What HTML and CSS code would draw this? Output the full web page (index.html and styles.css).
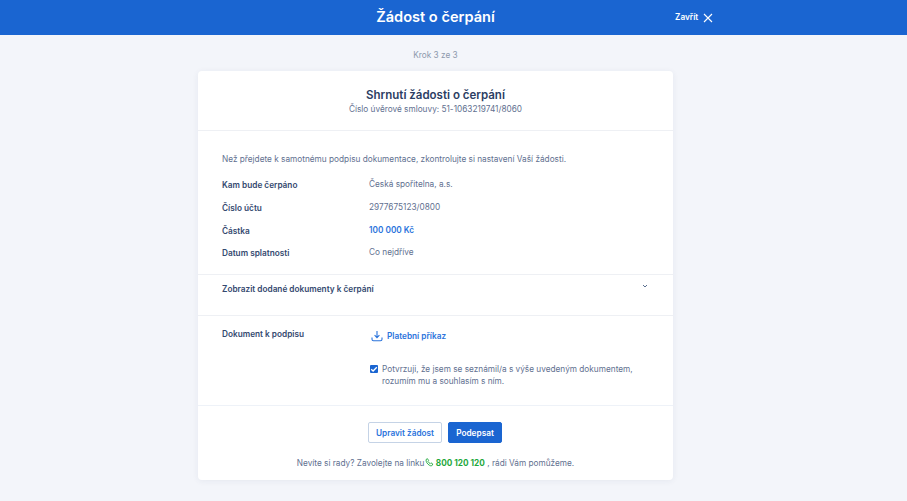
FILE: index.html
```html
<!DOCTYPE html>
<html lang="cs">
<head>
<meta charset="utf-8">
<title>Žádost o čerpání</title>
<link rel="stylesheet" href="styles.css">
</head>
<body>
<header class="topbar">
  <div class="topbar-inner">
    <h1 class="topbar-title">Žádost o čerpání</h1>
    <a class="close">Zavřít
      <svg class="close-icon" viewBox="0 0 10 10" width="10" height="10"><path d="M1 1l8 8M9 1l-8 8" fill="none" stroke="#fff" stroke-width="1.1"/></svg>
    </a>
  </div>
</header>
<main class="main">
  <p class="step">Krok 3 ze 3</p>
  <section class="card">
    <div class="card-head">
      <h2 class="card-title">Shrnutí žádosti o čerpání</h2>
      <p class="card-sub">Číslo úvěrové smlouvy: 51-1063219741/8060</p>
    </div>
    <div class="summary">
      <p class="intro">Než přejdete k samotnému podpisu dokumentace, zkontrolujte si nastavení Vaší žádosti.</p>
      <dl class="rows">
        <div class="row"><dt class="label">Kam bude čerpáno</dt><dd class="value">Česká spořitelna, a.s.</dd></div>
        <div class="row"><dt class="label">Číslo účtu</dt><dd class="value">2977675123/0800</dd></div>
        <div class="row"><dt class="label">Částka</dt><dd class="value amount">100 000 Kč</dd></div>
        <div class="row"><dt class="label">Datum splatnosti</dt><dd class="value">Co nejdříve</dd></div>
      </dl>
    </div>
    <div class="toggle">
      <span class="label">Zobrazit dodané dokumenty k čerpání</span>
      <svg class="chevron" viewBox="0 0 6 4" width="6" height="4"><path d="M1 1l2 2 2-2" fill="none" stroke="#5a6f8f" stroke-width="1"/></svg>
    </div>
    <div class="sign">
      <div class="label sign-label">Dokument k podpisu</div>
      <div class="sign-body">
        <a class="doc">
          <svg viewBox="0 0 12 12" width="12" height="12"><path d="M6 1v6.5M3.600 5.200L6 7.600l2.400-2.400M1 7.500v1.700c0 .9.6 1.500 1.500 1.500h7c.9 0 1.500-.6 1.500-1.500V7.500" fill="none" stroke="#2b74dc" stroke-width="1.100"/></svg>
          Platební příkaz
        </a>
        <div class="confirm">
          <span class="check"><svg viewBox="0 0 8 8" width="8" height="8"><path d="M1.200 4.200l1.900 1.800 3.700-3.800" fill="none" stroke="#fff" stroke-width="1.300"/></svg></span>
          <span>Potvrzuji, že jsem se seznámil/a s výše uvedeným dokumentem, rozumím mu a souhlasím s ním.</span>
        </div>
      </div>
    </div>
    <div class="foot">
      <div class="actions">
        <button class="btn btn-outline">Upravit žádost</button>
        <button class="btn btn-primary">Podepsat</button>
      </div>
      <p class="help">Nevíte si rady? Zavolejte na linku<svg class="phone" viewBox="0 0 10 10" width="9" height="9"><path d="M1.600 1.200l1.200-.4 1.200 2-.8.8c.5 1.200 1.400 2.100 2.600 2.600l.8-.8 2 1.200-.4 1.200c-.3.8-1 1.100-1.800.9C3.900 7.900 2.100 6.100 1.300 3.600c-.3-1 0-1.900.3-2.400z" fill="none" stroke="#1fa83c" stroke-width="1"/></svg> <strong class="tel">800 120 120</strong> , rádi Vám pomůžeme.</p>
    </div>
  </section>
</main>
</body>
</html>
```

FILE: styles.css
```css
* { box-sizing: border-box; }
html, body { margin: 0; height: 100%; }
body {
  background: #f3f5fa;
  font-family: Inter, "Noto Sans", sans-serif;
  font-size: 8.25px;
  color: #5f7090;
  overflow: hidden;
}
p, h1, h2, dl, dd { margin: 0; }

.topbar { height: 35px; background: #1a65d1; color: #fff; }
.topbar-inner {
  width: 871px;
  height: 100%;
  position: relative;
  display: flex;
  align-items: center;
  justify-content: center;
}
.topbar-title { font-size: 14.6px; font-weight: 600; line-height: 35px; }
.close {
  position: absolute;
  left: 675px;
  top: 12px;
  display: flex;
  align-items: center;
  gap: 5px;
  font-size: 8.25px;
  font-weight: 600;
  line-height: 11px;
}
.close-icon { display: block; }

.main { width: 871px; display: flex; flex-direction: column; align-items: center; }
.step { margin-top: 14px; padding-top: 1px; height: 22px; line-height: 11px; color: #8d99ad; }

.card {
  width: 475px;
  height: 409px;
  background: #fff;
  border-radius: 4px;
  box-shadow: 0 1px 6px rgba(40, 60, 100, .07);
  display: flex;
  flex-direction: column;
}
.card-head {
  height: 60px;
  padding-top: 16px;
  border-bottom: 1px solid #eef0f4;
  text-align: center;
}
.card-title { font-size: 11.5px; font-weight: 600; line-height: 16px; color: #2c3e63; }
.card-sub { line-height: 11px; padding-top: 1px; }

.summary { height: 144px; padding: 23px 24px 0; border-bottom: 1px solid #eef0f4; }
.intro { line-height: 11px; }
.rows { margin-top: 14.4px; display: flex; flex-direction: column; gap: 11.7px; }
.row { display: flex; height: 11px; }
.label { font-weight: 600; color: #34496f; line-height: 11px; }
.row .label { width: 147px; padding-top: 1px; }
.value { line-height: 11px; }
.amount { font-weight: 600; color: #2b74dc; }

.toggle {
  height: 41px;
  padding: 9px 24px 0;
  border-bottom: 1px solid #eef0f4;
  display: flex;
  justify-content: space-between;
  align-items: flex-start;
}
.chevron { margin: 0 1px 0 0; }

.sign { height: 90px; padding: 13px 24px 0; border-bottom: 1px solid #eef2f8; display: flex; }
.sign-label { width: 147px; }
.sign-body { flex: 1; }
.doc {
  display: flex;
  align-items: center;
  gap: 4px;
  margin: 0 0 0 2px;
  height: 14px;
  font-weight: 600;
  color: #2b74dc;
}
.confirm { margin-top: 20px; display: flex; gap: 4px; line-height: 12px; width: 275px; padding-left: 1px; }
.check {
  flex: none;
  width: 8px;
  height: 8px;
  margin-top: 2px;
  background: #1a65d1;
  border-radius: 1px;
  display: flex;
}

.foot { flex: 1; padding-top: 16px; }
.actions { display: flex; justify-content: center; gap: 6px; padding-right: 1px; }
.btn {
  height: 21px;
  border-radius: 2px;
  font: 600 8.25px Inter, "Noto Sans", sans-serif;
  padding: 0;
}
.btn-outline { width: 74px; background: #fff; border: 1px solid #c5d3e6; color: #2b74dc; }
.btn-primary { width: 54px; background: #1a65d1; border: 1px solid #1a65d1; color: #fff; }
.help { margin-top: 15px; text-align: center; line-height: 11px; }
.phone { vertical-align: -1px; }
.tel { font-weight: 700; color: #1fa83c; }
```
